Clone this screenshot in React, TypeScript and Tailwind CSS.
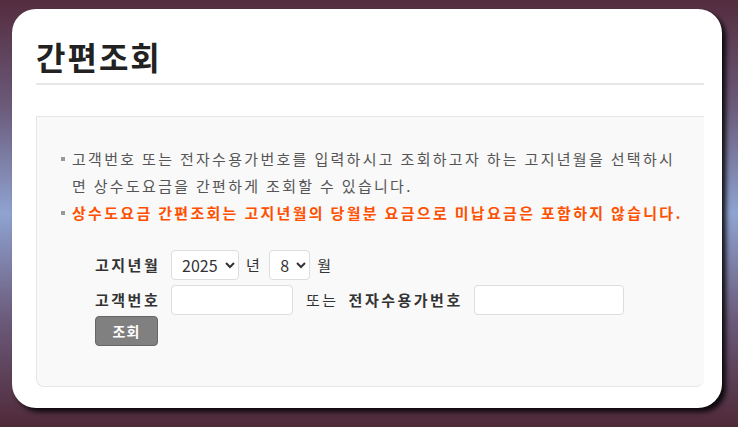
import { useState } from 'react'

const FONT = "font-['Noto_Sans_CJK_KR','Noto_Sans',sans-serif]"

export default function App() {
  const [year, setYear] = useState('2025')
  const [month, setMonth] = useState('8')

  return (
    <div
      className={`h-[427px] w-[738px] overflow-hidden bg-[linear-gradient(180deg,#542c3e_0%,#6b5a7a_25%,#8fa3d1_50%,#6b5a7a_75%,#4f2938_100%)] pl-[12px] pt-[9px] ${FONT}`}
    >
      <div className="flex h-[399px] w-[710px] flex-col rounded-[24px] bg-white pl-[24px] pr-[18px] shadow-[4px_4px_5px_rgba(0,0,0,0.85)]">
        <h1 className="mt-[24px] text-[32px] font-bold leading-[46px] tracking-[2px] text-[#222]">간편조회</h1>
        <div className="mt-[4px] h-[2px] bg-[#e6e6e6]" />

        <div className="mt-[31px] h-[271px] rounded-b-[8px] border border-r-0 border-[#e6e6e6] bg-[#f9f9f9] pl-[24px] pr-[18px] pt-[28px]">
          <ul className="text-[15px] leading-[27px] tracking-[2.3px]">
            <li className="flex text-[#555]">
              <span className="mr-[7px] mt-[12px] h-[4px] w-[4px] shrink-0 bg-[#999]" />
              <span>
                고객번호 또는 전자수용가번호를 입력하시고 조회하고자 하는 고지년월을 선택하시면 상수도요금을 간편하게 조회할 수
                있습니다.
              </span>
            </li>
            <li className="flex whitespace-nowrap font-bold text-[#ff5000]">
              <span className="mr-[7px] mt-[12px] h-[4px] w-[4px] shrink-0 bg-[#999]" />
              <span>상수도요금 간편조회는 고지년월의 당월분 요금으로 미납요금은 포함하지 않습니다.</span>
            </li>
          </ul>

          <div className="mt-[24px] pl-[34px] text-[15px] tracking-[2.5px] text-[#333]">
            <div className="flex h-[30px] items-center">
              <span className="w-[76px] font-bold">고지년월</span>
              <select
                value={year}
                onChange={(e) => setYear(e.target.value)}
                className="h-[30px] w-[68px] rounded-[4px] border border-[#dddddd] bg-white pl-[6px] text-[16px] tracking-normal text-[#333]"
              >
                <option>2024</option>
                <option>2025</option>
              </select>
              <span className="mx-[7px]">년</span>
              <select
                value={month}
                onChange={(e) => setMonth(e.target.value)}
                className="h-[30px] w-[41px] rounded-[4px] border border-[#dddddd] bg-white pl-[6px] text-[16px] tracking-normal text-[#333]"
              >
                {Array.from({ length: 12 }, (_, i) => (
                  <option key={i}>{i + 1}</option>
                ))}
              </select>
              <span className="ml-[7px]">월</span>
            </div>

            <div className="mt-[5px] flex h-[30px] items-center">
              <span className="w-[76px] font-bold">고객번호</span>
              <input className="h-[30px] w-[122px] rounded-[4px] border border-[#dddddd] bg-white" />
              <span className="ml-[13px] mr-[10px]">또는</span>
              <span className="mr-[11px] font-bold">전자수용가번호</span>
              <input className="h-[30px] w-[150px] rounded-[4px] border border-[#dddddd] bg-white" />
            </div>

            <button className="mt-[1px] flex h-[30px] w-[63px] items-center justify-center rounded-[4px] border border-[#666] bg-[#808080] text-[14px] font-bold tracking-[1px] text-white">
              조회
            </button>
          </div>
        </div>
      </div>
    </div>
  )
}
